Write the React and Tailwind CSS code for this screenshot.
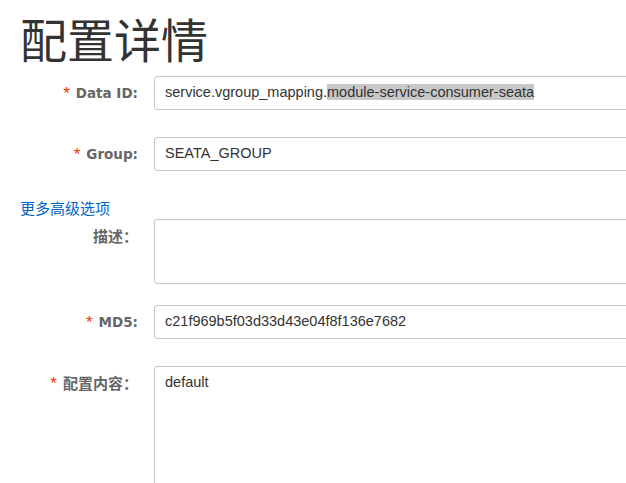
import React from 'react';

const LABEL_FONT = { fontFamily: '"DejaVu Sans", "Noto Sans CJK SC", sans-serif' };
const FIELD_FONT = { fontFamily: '"Liberation Sans", "Noto Sans CJK SC", sans-serif' };

function Label({ text, required, cjk }) {
  return (
    <div className="w-[154px] flex-none pr-4 flex justify-end items-start h-[34px]">
      <div className="flex items-center h-[34px]">
        {required && (
          <span className="text-[#ff3000] text-[17px] leading-none self-start mt-[9px] mr-[6px]" style={FIELD_FONT}>
            *
          </span>
        )}
        <span
          className={`font-bold text-[#666] ${cjk ? 'text-[15px]' : 'text-[13.5px]'}`}
          style={cjk ? { fontFamily: '"Noto Sans CJK SC", sans-serif' } : LABEL_FONT}
        >
          {text}
        </span>
      </div>
    </div>
  );
}

function FormRow({ label, required, cjk, className = '', children }) {
  return (
    <div className={`flex items-start ${className}`}>
      <Label text={label} required={required} cjk={cjk} />
      {children}
    </div>
  );
}

function Field({ children, height = 'h-[34px]', multiline = false }) {
  return (
    <div
      className={`w-[520px] flex-none ${height} border border-[#c4c6cf] rounded-[3px] bg-white px-[10px] text-[14.5px] text-[#333] ${
        multiline ? 'pt-[5px] leading-[20px]' : 'flex items-center'
      }`}
      style={FIELD_FONT}
    >
      {children}
    </div>
  );
}

export default function App() {
  return (
    <div className="w-[626px] h-[483px] overflow-hidden bg-white">
      <h1
        className="pl-[20px] pt-[12px] text-[47px] leading-[52px] font-normal text-[#333]"
        style={{ fontFamily: '"Noto Sans CJK SC", sans-serif' }}
      >
        配置详情
      </h1>

      <div className="mt-[12px]">
        <FormRow label="Data ID:" required>
          <Field>
            <span>
              service.vgroup_mapping.
              <span className="bg-[#c8c8c8]">module-service-consumer-seata</span>
            </span>
          </Field>
        </FormRow>

        <FormRow label="Group:" required className="mt-[27px]">
          <Field>SEATA_GROUP</Field>
        </FormRow>

        <div className="mt-[27px] h-[20px] pl-[20px] flex items-center">
          <a
            className="text-[15px] leading-[20px] text-[#0064c8] cursor-pointer"
            style={{ fontFamily: '"Noto Sans CJK SC", sans-serif' }}
          >
            更多高级选项
          </a>
        </div>

        <FormRow label="描述：" cjk className="mt-[1px]">
          <Field height="h-[65px]" multiline />
        </FormRow>

        <FormRow label="MD5:" required className="mt-[21px]">
          <Field>c21f969b5f03d33d43e04f8f136e7682</Field>
        </FormRow>

        <FormRow label="配置内容：" required cjk className="mt-[27px]">
          <Field height="h-[160px]" multiline>
            default
          </Field>
        </FormRow>
      </div>
    </div>
  );
}
